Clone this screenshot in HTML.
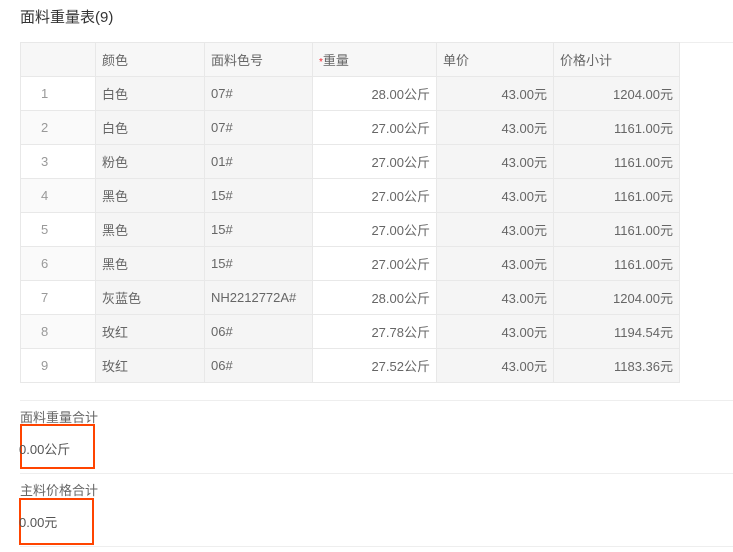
<!DOCTYPE html>
<html><head><meta charset="utf-8"><style>
*{margin:0;padding:0;box-sizing:border-box}
body{width:733px;height:552px;background:#fff;font-family:"Liberation Sans","Noto Sans CJK SC",sans-serif;color:#666;font-size:13px;position:relative;overflow:hidden}
.title{position:absolute;left:20px;top:8px;font-size:15px;color:#333;line-height:20px}
.topline{position:absolute;left:20px;top:42px;width:713px;height:1px;background:#eee}
table{position:absolute;left:20px;top:42px;border-collapse:collapse;table-layout:fixed}
td{border:1px solid #e8e8e8;height:34px;padding:0 6px;white-space:nowrap}
td.c{padding-left:20px;color:#999}
td.r{text-align:right}
.g{background:#f5f5f5}
tr.h td{background:#f7f7f7}
tr.e td.c{background:#fafafa}
.star{color:#f5222d;font-size:10px}
.line{position:absolute;left:20px;width:713px;height:1px;background:#eee}
.lbl{position:absolute;left:20px;font-size:13px;color:#666;line-height:15px}
.box{position:absolute;border:2px solid #ff4400}
.val{position:absolute;left:19px;font-size:13px;color:#555;line-height:15px}
</style></head><body>
<div class="title">面料重量表(9)</div>
<div class="topline"></div>
<table>
<colgroup><col style="width:75px"><col style="width:109px"><col style="width:108px"><col style="width:124px"><col style="width:117px"><col style="width:126px"></colgroup>
<tr class="h"><td></td><td>颜色</td><td>面料色号</td><td><span class="star">*</span>重量</td><td>单价</td><td>价格小计</td></tr>
<tr><td class="c">1</td><td class="g">白色</td><td class="g">07#</td><td class="r">28.00公斤</td><td class="r g">43.00元</td><td class="r g">1204.00元</td></tr>
<tr class="e"><td class="c">2</td><td class="g">白色</td><td class="g">07#</td><td class="r">27.00公斤</td><td class="r g">43.00元</td><td class="r g">1161.00元</td></tr>
<tr><td class="c">3</td><td class="g">粉色</td><td class="g">01#</td><td class="r">27.00公斤</td><td class="r g">43.00元</td><td class="r g">1161.00元</td></tr>
<tr class="e"><td class="c">4</td><td class="g">黑色</td><td class="g">15#</td><td class="r">27.00公斤</td><td class="r g">43.00元</td><td class="r g">1161.00元</td></tr>
<tr><td class="c">5</td><td class="g">黑色</td><td class="g">15#</td><td class="r">27.00公斤</td><td class="r g">43.00元</td><td class="r g">1161.00元</td></tr>
<tr class="e"><td class="c">6</td><td class="g">黑色</td><td class="g">15#</td><td class="r">27.00公斤</td><td class="r g">43.00元</td><td class="r g">1161.00元</td></tr>
<tr><td class="c">7</td><td class="g">灰蓝色</td><td class="g">NH2212772A#</td><td class="r">28.00公斤</td><td class="r g">43.00元</td><td class="r g">1204.00元</td></tr>
<tr class="e"><td class="c">8</td><td class="g">玫红</td><td class="g">06#</td><td class="r">27.78公斤</td><td class="r g">43.00元</td><td class="r g">1194.54元</td></tr>
<tr><td class="c">9</td><td class="g">玫红</td><td class="g">06#</td><td class="r">27.52公斤</td><td class="r g">43.00元</td><td class="r g">1183.36元</td></tr>
</table>
<div class="line" style="top:400px"></div>
<div class="lbl" style="top:410px">面料重量合计</div>
<div class="box" style="left:20px;top:424px;width:75px;height:45px"></div>
<div class="val" style="top:442px">0.00公斤</div>
<div class="line" style="top:473px"></div>
<div class="lbl" style="top:483px">主料价格合计</div>
<div class="box" style="left:19px;top:498px;width:75px;height:47px"></div>
<div class="val" style="top:515px">0.00元</div>
<div class="line" style="top:546px"></div>
</body></html>
